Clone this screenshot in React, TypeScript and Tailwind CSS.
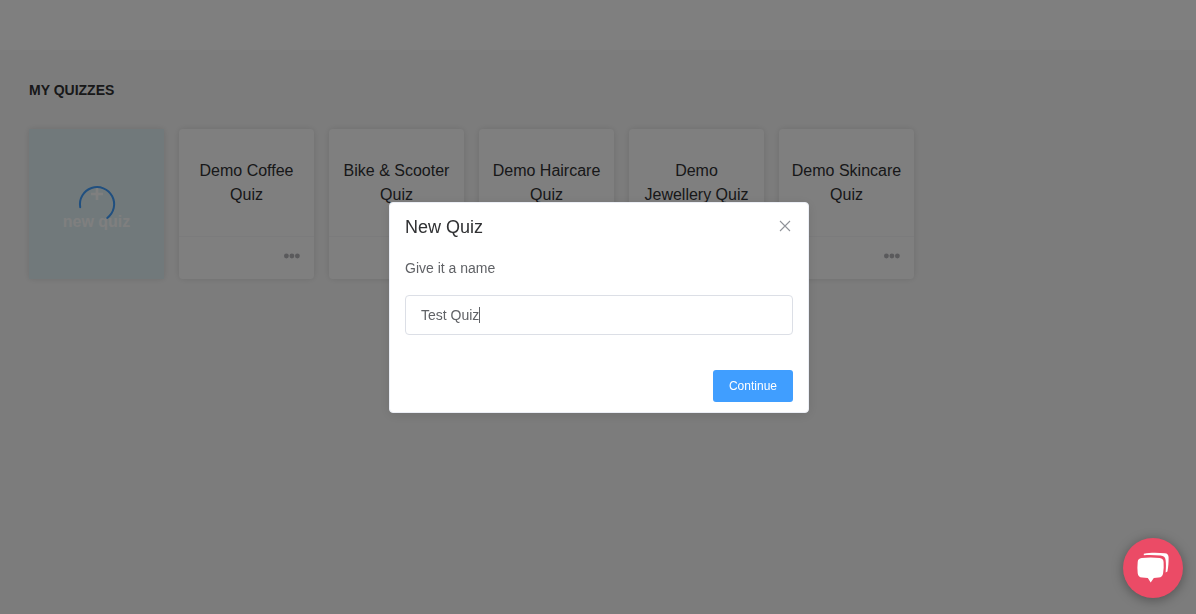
import { useState } from "react";

const quizzes = [
  "Demo Coffee Quiz",
  "Bike & Scooter Quiz",
  "Demo Haircare Quiz",
  "Demo Jewellery Quiz",
  "Demo Skincare Quiz",
];

function Spinner() {
  return (
    <svg className="h-[42px] w-[42px]" viewBox="0 0 42 42" fill="none" aria-hidden="true">
      <path
        d="M4.2 24.2A17.1 17.1 0 1 1 31.2 35"
        stroke="#409eff"
        strokeWidth="2"
        strokeLinecap="round"
      />
    </svg>
  );
}

function NewQuizCard() {
  return (
    <button
      type="button"
      className="relative flex h-[150px] w-[135px] flex-col items-center justify-center bg-[#e2f3f7] pt-2 text-base font-bold text-white shadow-[0_0_6px_rgba(0,0,0,0.12)]"
    >
      <svg className="h-6 w-4" viewBox="0 0 16 24" fill="none" aria-hidden="true">
        <path d="M8 6v12M2 12h12" stroke="currentColor" strokeWidth="2.6" />
      </svg>
      <span className="pt-1 leading-6">new quiz</span>
      <span className="absolute inset-0 flex items-center justify-center">
        <Spinner />
      </span>
    </button>
  );
}

function QuizCard({ name }: { name: string }) {
  return (
    <article className="flex h-[150px] w-[135px] flex-col rounded bg-white shadow-[0_0_6px_rgba(0,0,0,0.12)]">
      <h2 className="flex flex-1 items-center justify-center px-[11px] text-center text-base leading-6 text-[#303133]">
        {name}
      </h2>
      <div className="flex h-[43px] items-center justify-end border-t border-[#f6f6f8] px-3">
        <button type="button" aria-label={`Options for ${name}`}>
          <svg className="h-5 w-5" viewBox="0 0 20 20" fill="#b4b4b8" aria-hidden="true">
            <circle cx="4.4" cy="8" r="2.4" />
            <circle cx="9.9" cy="8" r="2.4" />
            <circle cx="15.4" cy="8" r="2.4" />
          </svg>
        </button>
      </div>
    </article>
  );
}

function NewQuizDialog() {
  const [name, setName] = useState("Test Quiz");
  return (
    <div className="fixed inset-0 flex items-center justify-center bg-black/50 pt-px pl-0.5">
      <div
        role="dialog"
        aria-modal="true"
        aria-labelledby="dialog-title"
        className="w-[420px] max-w-full rounded border border-[#ebeef5] bg-white pb-2.5 shadow-[0_2px_12px_rgba(0,0,0,0.1)]"
      >
        <header className="flex items-center justify-between px-[15px] pt-[15px] pb-2.5">
          <h2 id="dialog-title" className="text-lg leading-[18px] text-[#303133]">
            New Quiz
          </h2>
          <button type="button" aria-label="Close" className="text-[#909399]">
            <svg className="h-4 w-4" viewBox="0 0 16 16" fill="none" aria-hidden="true">
              <path d="M3 2l10 10M13 2l-10 10" stroke="currentColor" strokeWidth="1.1" />
            </svg>
          </button>
        </header>
        <form onSubmit={(e) => e.preventDefault()}>
          <div className="px-[15px] pt-2.5 pb-[30px]">
            <label htmlFor="quiz-name" className="block text-sm leading-6 text-[#606266]">
              Give it a name
            </label>
            <div className="relative mt-[15px]">
              <input
                id="quiz-name"
                type="text"
                value={name}
                onChange={(e) => setName(e.target.value)}
                className="block h-10 w-full rounded border border-[#dcdfe6] bg-white px-[15px] text-sm text-[#606266] outline-none"
              />
              <span className="pointer-events-none absolute inset-y-0 left-4 flex items-center text-sm" aria-hidden="true">
                <span className="invisible">{name}</span>
                <span className="h-4 w-px bg-[#606266]" />
              </span>
            </div>
          </div>
          <div className="flex justify-end px-[15px] pt-[5px]">
            <button type="submit" className="h-8 rounded-[3px] bg-[#409eff] px-4 text-xs text-white">
              Continue
            </button>
          </div>
        </form>
      </div>
    </div>
  );
}

function ChatButton() {
  return (
    <button
      type="button"
      aria-label="Open chat"
      className="fixed right-[13px] bottom-4 flex h-[60px] w-[60px] items-center justify-center rounded-full bg-[#eb4b66] shadow-[0_2px_12px_rgba(0,0,0,0.35)]"
    >
      <svg className="h-[60px] w-[60px]" viewBox="0 0 60 60" fill="#fff" aria-hidden="true">
        <path d="M20.8 15.8C26.8 14.4 34.5 14.6 41.8 15.2C44.4 15.4 45.6 16.8 45.6 19.2C45.6 24.5 45.4 28.6 44.4 33.6L42.6 34.6C43 30.2 43.1 26.1 42.6 22.1C42.2 19 40.6 17.9 37.6 17.6C32 17 26.4 16.9 20.8 17.2Z" />
        <path d="M18.6 19.9C24.4 19.2 31 19.2 36.7 19.9C39.2 20.2 40.4 21.4 40.6 23.9C40.9 27.7 40.7 31.5 40.1 35.2C39.7 38 38.5 39.2 35.6 39.5L30.8 39.9L27.7 44.6L24.8 39.9L19.2 39.5C16.3 39.2 15 38 14.7 35.2C14.3 31.5 14.3 27.7 14.7 23.9C14.9 21.4 16.1 20.2 18.6 19.9Z" />
      </svg>
    </button>
  );
}

export default function App() {
  return (
    <div className="min-h-screen bg-[#f9f9f9] font-['Liberation_Sans',Arial,sans-serif]">
      <header className="h-[50px] bg-white" />
      <main className="px-[29px] pt-[30px]">
        <h1 className="text-sm leading-5 font-bold text-[#303133]">MY QUIZZES</h1>
        <div className="mt-[29px] flex flex-wrap gap-[15px]">
          <NewQuizCard />
          {quizzes.map((name) => (
            <QuizCard key={name} name={name} />
          ))}
        </div>
      </main>
      <NewQuizDialog />
      <ChatButton />
    </div>
  );
}
